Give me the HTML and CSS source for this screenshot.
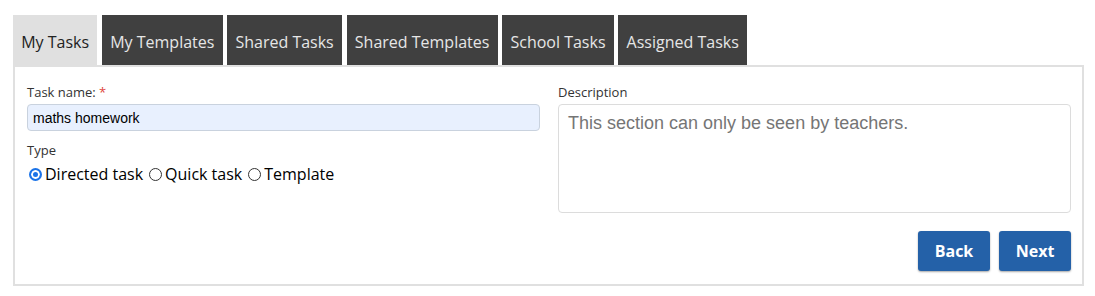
FILE: index.html
```html
<!DOCTYPE html>
<html>
<head>
<meta charset="utf-8">
<link rel="stylesheet" href="styles.css">
</head>
<body>
<div class="page">
  <nav class="tabs">
    <div class="tab active">My Tasks</div>
    <div class="tab">My Templates</div>
    <div class="tab">Shared Tasks</div>
    <div class="tab">Shared Templates</div>
    <div class="tab">School Tasks</div>
    <div class="tab">Assigned Tasks</div>
  </nav>
  <section class="panel">
    <div class="cols">
      <div class="col">
        <label class="lbl">Task name: <span class="req">*</span></label>
        <div class="input">maths homework</div>
        <div class="lbl type-lbl">Type</div>
        <div class="radios">
          <label class="radio"><span class="dot on"></span>Directed task</label>
          <label class="radio"><span class="dot"></span>Quick task</label>
          <label class="radio"><span class="dot"></span>Template</label>
        </div>
      </div>
      <div class="col">
        <label class="lbl">Description</label>
        <div class="textarea">This section can only be seen by teachers.</div>
      </div>
    </div>
    <div class="actions">
      <button class="btn">Back</button>
      <button class="btn">Next</button>
    </div>
  </section>
</div>
</body>
</html>
```

FILE: styles.css
```css
* { box-sizing: border-box; }
html, body { margin: 0; padding: 0; background: #fff; }
body { font-family: "Open Sans", "Liberation Sans", sans-serif; color: #333; }
.page { padding: 15px 11px 0 13px; }
.tabs { display: flex; gap: 4.7px; height: 50px; }
.tab {
  height: 50px;
  padding: 4px 8.2px 0;
  background: #404040;
  color: #e6e6e6;
  font-size: 16px;
  display: flex;
  align-items: center;
  white-space: nowrap;
}
.tab.active { background: #e0e0e0; color: #222; }
.panel {
  border: 2px solid #e0e0e0;
  padding: 16px 11px 13px 12px;
}
.cols { display: grid; grid-template-columns: 1fr 1fr; column-gap: 18px; }
.col { display: flex; flex-direction: column; }
.lbl { font-size: 13px; line-height: 18px; color: #333; height: 18px; margin-bottom: 3px; }
.req { color: #e0463c; }
.input {
  height: 27px;
  background: #e8f0fe;
  border: 1px solid #c9d2de;
  border-radius: 4px;
  font-family: "Liberation Sans", Arial, sans-serif;
  font-size: 14px;
  color: #000;
  padding: 0 5px;
  display: flex;
  align-items: center;
}
.type-lbl { margin-top: 10px; margin-bottom: 4px; }
.radios { display: flex; gap: 4px; align-items: center; font-size: 16px; color: #000; line-height: 22px; }
.radio { display: flex; align-items: center; }
.dot {
  width: 13px; height: 13px; border-radius: 50%;
  border: 1px solid #333; margin: 0 3px 0 2px; display: inline-block;
  background: #fff;
}
.dot.on { border: 2px solid #1a73e8; box-shadow: inset 0 0 0 2px #fff; background: #1a73e8; }
.textarea {
  height: 109px;
  border: 1px solid #dcdcdc;
  border-radius: 4px;
  font-family: "Liberation Sans", Arial, sans-serif;
  font-size: 18px;
  line-height: 22px;
  color: #757575;
  padding: 7px 9px;
}
.actions { display: flex; justify-content: flex-end; gap: 9px; margin-top: 18px; }
.btn {
  width: 72px; height: 40px;
  background: #2461a8;
  color: #fff;
  border: none;
  border-radius: 3px;
  font-family: "Open Sans", "Liberation Sans", sans-serif;
  font-weight: 700;
  font-size: 16px;
  box-shadow: 0 1px 2px rgba(0,0,0,0.35);
  padding: 0;
}
```
